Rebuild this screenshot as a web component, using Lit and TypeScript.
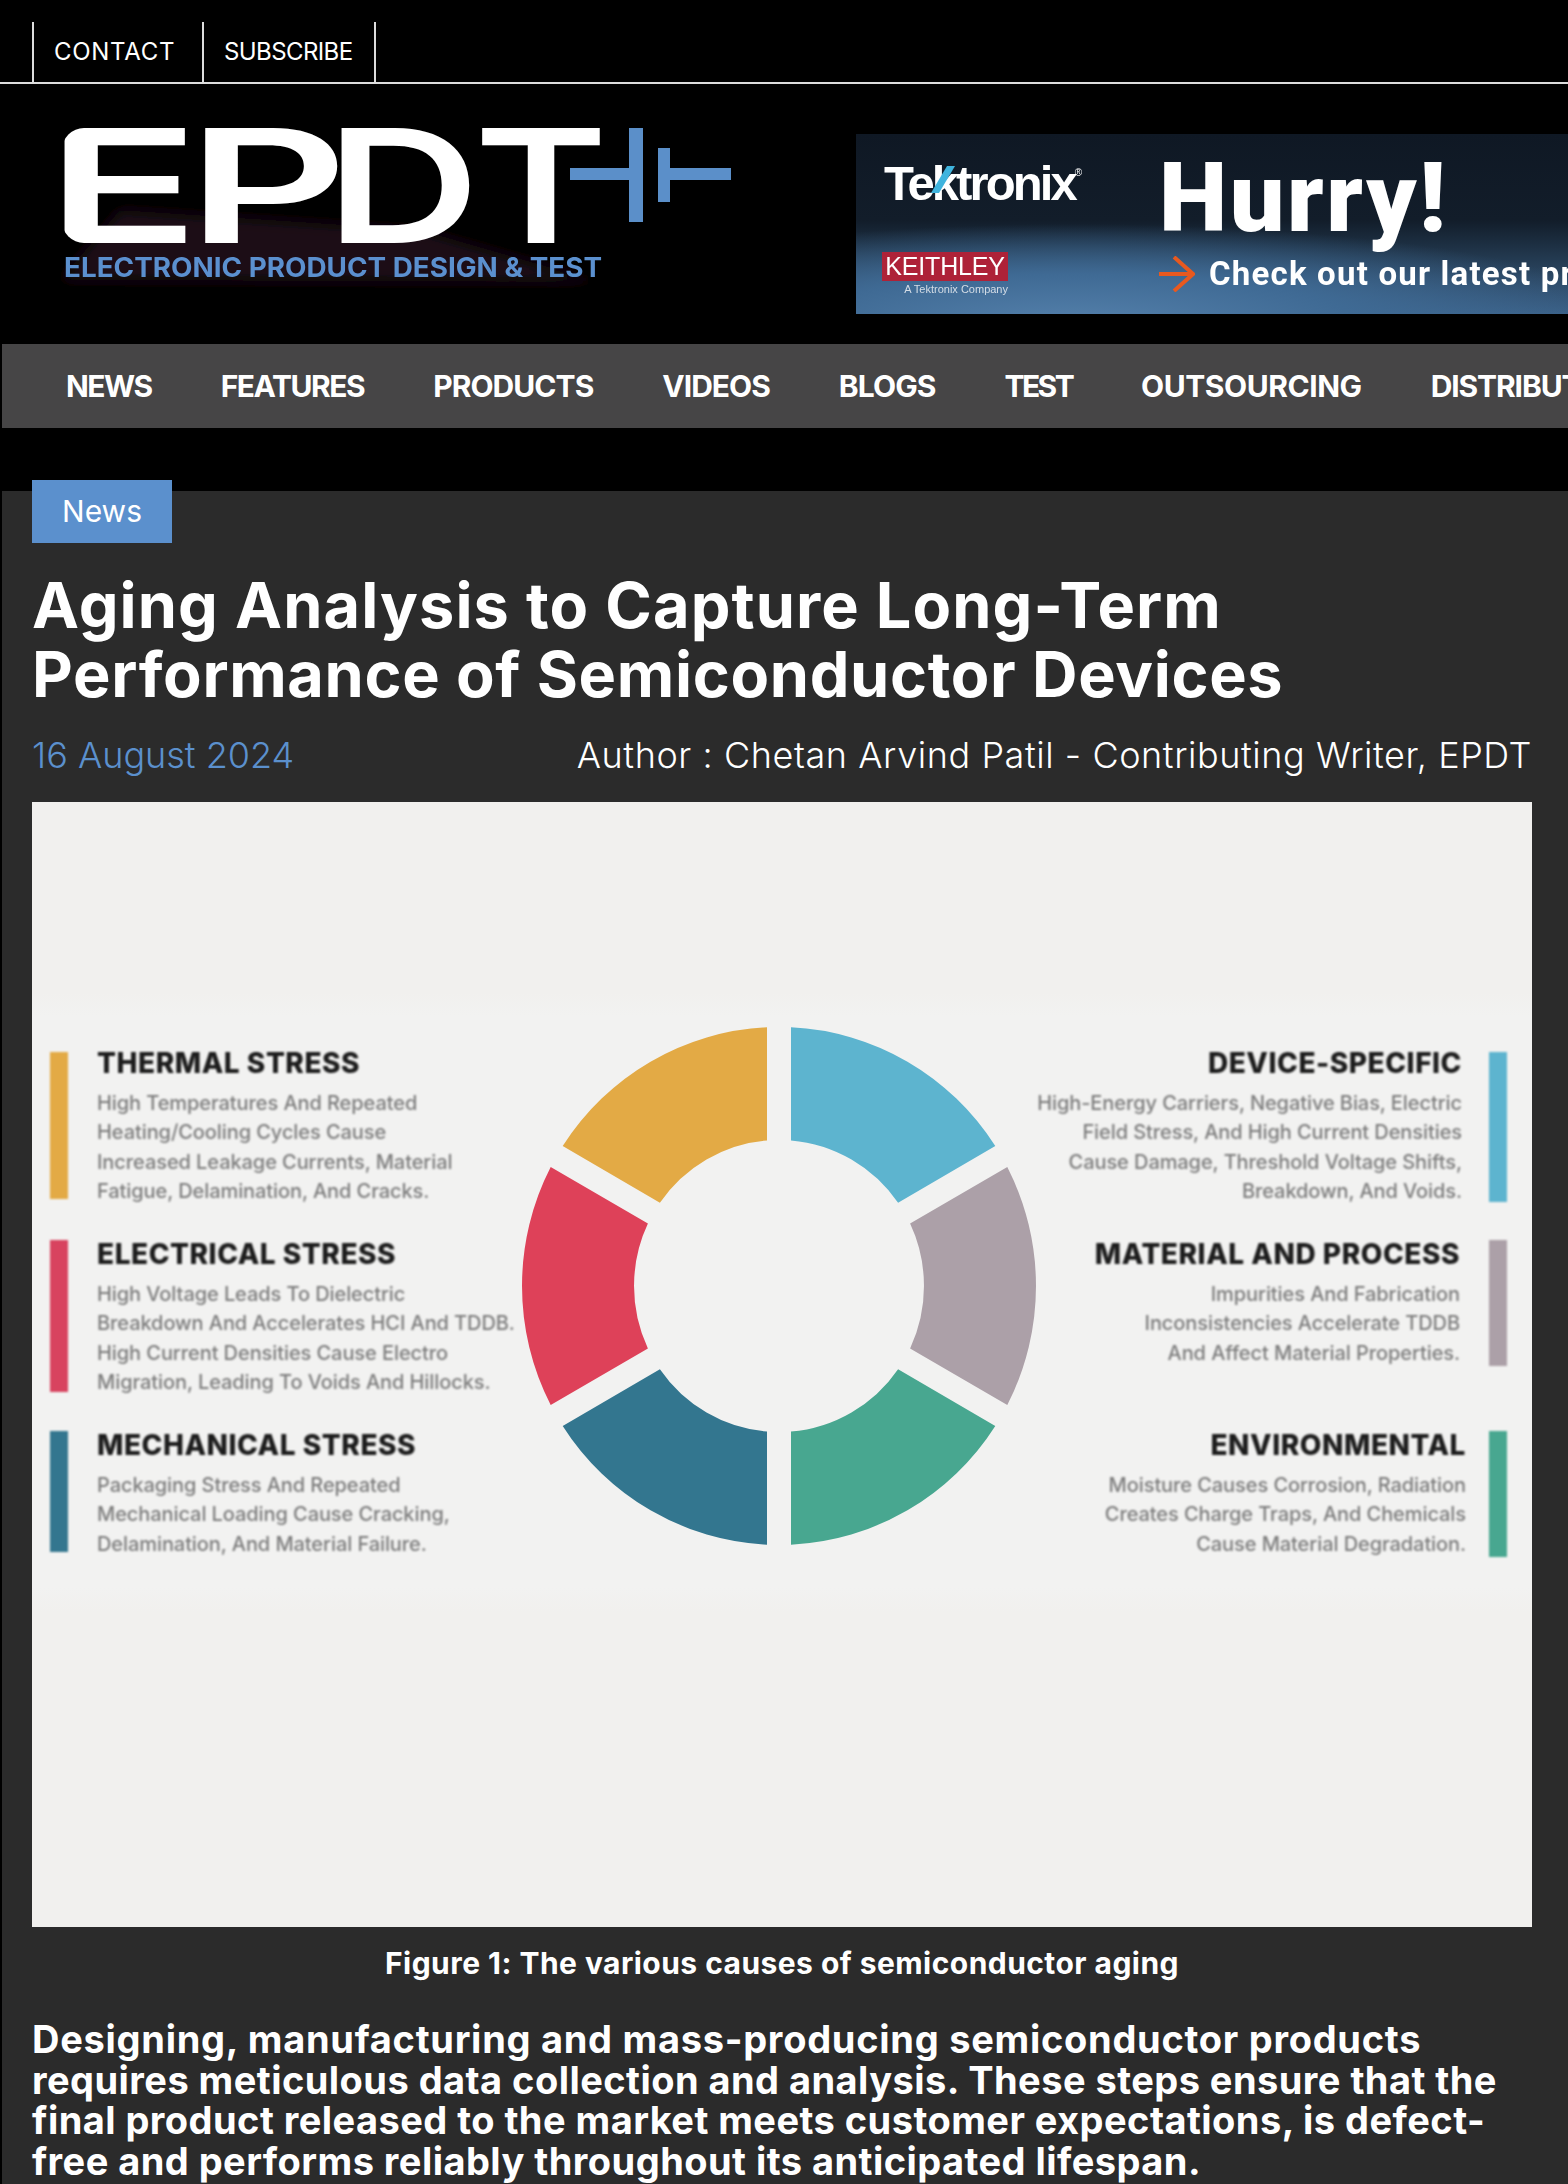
import { LitElement, html, svg, css } from "lit";
import { customElement } from "lit/decorators.js";

// letter spacing per item, the site's font has other proportions
const navItems = [
  { label: "NEWS", spacing: -1.5 },
  { label: "FEATURES", spacing: -1.45 },
  { label: "PRODUCTS", spacing: -0.95 },
  { label: "VIDEOS", spacing: -1 },
  { label: "BLOGS", spacing: -0.9 },
  { label: "TEST", spacing: -2.6 },
  { label: "OUTSOURCING", spacing: -0.45 },
  { label: "DISTRIBUTION", spacing: -1.1 },
];

interface Cause {
  title: string;
  lines: string[];
  color: string;
  barHeight: number;
  gap: number;
}

const leftCauses: Cause[] = [
  {
    title: "THERMAL STRESS",
    lines: ["High Temperatures And Repeated", "Heating/Cooling Cycles Cause", "Increased Leakage Currents, Material", "Fatigue, Delamination, And Cracks."],
    color: "#e3aa45",
    barHeight: 147,
    gap: 29,
  },
  {
    title: "ELECTRICAL STRESS",
    lines: ["High Voltage Leads To Dielectric", "Breakdown And Accelerates HCI And TDDB.", "High Current Densities Cause Electro", "Migration, Leading To Voids And Hillocks."],
    color: "#d8435f",
    barHeight: 152,
    gap: 29,
  },
  {
    title: "MECHANICAL STRESS",
    lines: ["Packaging Stress And Repeated", "Mechanical Loading Cause Cracking,", "Delamination, And Material Failure."],
    color: "#33768f",
    barHeight: 121,
    gap: 29,
  },
];

const rightCauses: Cause[] = [
  {
    title: "DEVICE-SPECIFIC",
    lines: ["High-Energy Carriers, Negative Bias, Electric", "Field Stress, And High Current Densities", "Cause Damage, Threshold Voltage Shifts,", "Breakdown, And Voids."],
    color: "#5db4cf",
    barHeight: 150,
    gap: 27,
  },
  {
    title: "MATERIAL AND PROCESS",
    lines: ["Impurities And Fabrication", "Inconsistencies Accelerate TDDB", "And Affect Material Properties."],
    color: "#aca0a8",
    barHeight: 126,
    gap: 29,
  },
  {
    title: "ENVIRONMENTAL",
    lines: ["Moisture Causes Corrosion, Radiation", "Creates Charge Traps, And Chemicals", "Cause Material Degradation."],
    color: "#48a790",
    barHeight: 126,
    gap: 23,
  },
];

// six ring segments, clockwise from the top right
const segments = ["#5db4cf", "#aca0a8", "#48a790", "#33768f", "#de4159", "#e3aa45"];

function segmentPath(index: number) {
  const R = 257;
  const r = 145;
  const half = 12;
  const start = -90 + index * 60;
  const pt = (radius: number, deg: number, sign: number) => {
    const a = (deg * Math.PI) / 180 + sign * Math.asin(half / radius);
    return `${(radius * Math.cos(a)).toFixed(1)} ${(radius * Math.sin(a)).toFixed(1)}`;
  };
  return `M${pt(R, start, 1)} A${R} ${R} 0 0 1 ${pt(R, start + 60, -1)} L${pt(r, start + 60, -1)} A${r} ${r} 0 0 0 ${pt(r, start, 1)} Z`;
}

@customElement("app-root")
export class AppRoot extends LitElement {
  static styles = css`
    :host {
      display: block;
      width: 1568px;
      height: 2184px;
      overflow: hidden;
      background: #000;
      color: #fff;
      font-family: Inter, "Noto Sans", sans-serif;
    }

    /* top links */
    .top {
      display: flex;
      height: 60px;
      padding: 22px 0 0 32px;
      border-bottom: 2px solid #ddd;
    }
    .top a {
      display: flex;
      align-items: center;
      padding: 0 0 2px 20px;
      border-left: 2px solid #ddd;
      font-size: 24px;
      box-sizing: border-box;
    }
    .top a.contact {
      width: 170px;
      letter-spacing: 0.7px;
    }
    .top a.subscribe {
      width: 174px;
      letter-spacing: -0.6px;
      border-right: 2px solid #ddd;
    }

    /* logo + banner */
    .masthead {
      display: flex;
      height: 260px;
    }
    .logo {
      flex: none;
      display: block;
      font-family: Inter, sans-serif;
    }
    .logo-mark {
      filter: blur(0.5px);
    }
    .banner {
      flex: none;
      width: 900px;
      height: 180px;
      margin-top: 50px;
      display: flex;
      background:
        radial-gradient(ellipse 560px 100px at 220px 190px, #5480ab 0, #3f6a94 50%, rgba(44, 76, 108, 0) 100%),
        linear-gradient(#0f1824 0, #121d2a 48%, #22384e 68%, #3a5f85 100%);
    }
    .brands {
      flex: none;
      width: 275px;
      padding-left: 28px;
    }
    .tek {
      position: relative;
      width: 200px;
      margin-top: 21px;
      font-family: "Liberation Sans", sans-serif;
      font-weight: 700;
      font-size: 49px;
      line-height: 56px;
      letter-spacing: -2.9px;
      filter: blur(0.5px);
    }
    .tek sup {
      font-size: 10px;
      font-weight: 400;
      letter-spacing: 0;
      vertical-align: 24px;
      line-height: 0;
    }
    .tek svg {
      position: absolute;
      left: 47px;
      top: 8px;
    }
    .keithley {
      width: 126px;
      height: 29px;
      margin: 41px 0 0 -2px;
      background: #ae2238;
      font-family: "Liberation Sans", sans-serif;
      font-size: 25px;
      line-height: 29px;
      text-align: center;
      letter-spacing: -0.2px;
      filter: blur(0.4px);
    }
    .company {
      width: 126px;
      margin: 2px 0 0 -2px;
      text-align: right;
      font-family: "Liberation Sans", sans-serif;
      font-size: 11px;
      line-height: 13px;
      color: #d4dde6;
      filter: blur(0.3px);
    }
    .pitch {
      flex: none;
      width: 640px;
      font-family: Roboto, sans-serif;
      font-weight: 700;
      filter: blur(0.4px);
    }
    .hurry {
      font-size: 97px;
      line-height: 104px;
      margin-top: 12px;
      letter-spacing: 2.5px;
      font-weight: 900;
    }
    .check {
      display: flex;
      align-items: center;
      gap: 14px;
      margin-top: 4px;
      font-size: 33px;
      line-height: 40px;
      letter-spacing: 1.2px;
      white-space: nowrap;
    }

    /* main nav */
    .nav {
      display: flex;
      gap: 69px;
      height: 84px;
      align-items: center;
      margin-left: 2px;
      padding-left: 64px;
      background: #464546;
      font-size: 30px;
      font-weight: 700;
      white-space: nowrap;
    }

    /* article */
    .article {
      margin: 63px 0 0 2px;
      padding: 0 36px 0 30px;
      height: 1693px;
      background: #2b2b2b;
    }
    .badge {
      position: relative;
      top: -11px;
      width: 140px;
      height: 63px;
      box-sizing: border-box;
      padding-bottom: 2px;
      display: flex;
      align-items: center;
      justify-content: center;
      background: #5b90cd;
      font-size: 30px;
    }
    h1 {
      margin: 17px 0 0;
      font-size: 63px;
      line-height: 69px;
      font-weight: 700;
      white-space: nowrap;
    }
    h1 .first {
      letter-spacing: 1.1px;
    }
    h1 .second {
      letter-spacing: 0.67px;
    }
    .meta {
      display: flex;
      justify-content: space-between;
      margin-top: 24px;
      font-size: 36px;
      line-height: 44px;
      font-weight: 300;
    }
    .date {
      color: #5b90cd;
    }
    .author {
      letter-spacing: 0.57px;
    }

    /* figure, drawn as the picture it is in the original */
    .figure {
      height: 1125px;
      margin-top: 25px;
      box-sizing: border-box;
      padding: 225px 25px 0 18px;
      background: linear-gradient(#f1f0ee 190px, #f2f2f1 215px, #f2f2f1 785px, #f1f0ee 810px);
      display: flex;
      color: #1c1c1c;
    }
    .col {
      flex: none;
      width: 472px;
      padding-top: 25px;
      display: grid;
      grid-template-rows: 188px 191px auto;
      filter: blur(0.85px);
    }
    .col.right {
      width: 471px;
    }
    .cause {
      display: flex;
      align-items: flex-start;
    }
    .right .cause {
      justify-content: flex-end;
      text-align: right;
    }
    .bar {
      flex: none;
      width: 18px;
    }
    .cause-title {
      margin-top: -1px;
      font-size: 28px;
      line-height: 30px;
      font-weight: 800;
      letter-spacing: 0.55px;
      white-space: nowrap;
    }
    .cause:first-child .cause-title {
      margin-top: -4px;
    }
    .cause-text {
      margin-top: 11px;
      font-size: 20px;
      line-height: 29.3px;
      font-weight: 500;
      letter-spacing: -0.08px;
      color: #7c7c7c;
      white-space: nowrap;
    }
    .ring {
      flex: none;
      display: block;
      width: 514px;
      height: 518px;
      overflow: visible;
      filter: blur(0.5px);
    }

    .caption {
      margin-top: 16px;
      text-align: center;
      font-size: 30px;
      line-height: 40px;
      font-weight: 700;
      letter-spacing: 0.45px;
    }
    .lead {
      margin-top: 36px;
      font-size: 38px;
      line-height: 40.7px;
      font-weight: 700;
      letter-spacing: 0.45px;
      white-space: nowrap;
    }
    .lead .first {
      letter-spacing: 0.72px;
    }
  `;

  renderLogo() {
    return html`<svg class="logo" width="856" height="260" viewBox="0 84 856 260">
      <defs>
        <filter id="soft"><feGaussianBlur stdDeviation="7"></feGaussianBlur></filter>
        <clipPath id="e-round"><rect x="62" y="128" width="220" height="115" rx="22"></rect></clipPath>
      </defs>
      <path d="M60 280 L120 210 L420 230 L600 282 Z" fill="#1a0b16" filter="url(#soft)"></path>
      <g class="logo-mark">
        <g fill="#fff" font-size="158" font-weight="600">
          <text x="46" y="243" textLength="154" lengthAdjust="spacingAndGlyphs" clip-path="url(#e-round)">E</text>
          <text x="187" y="243" textLength="161" lengthAdjust="spacingAndGlyphs">P</text>
          <text x="326" y="243" textLength="154" lengthAdjust="spacingAndGlyphs">D</text>
          <text x="474" y="243" textLength="134" lengthAdjust="spacingAndGlyphs">T</text>
        </g>
        <g fill="#5b8fc9">
          <rect x="570" y="168" width="60" height="12"></rect>
          <rect x="629" y="128" width="14" height="94"></rect>
          <rect x="658" y="148" width="12" height="54"></rect>
          <rect x="670" y="168" width="61" height="12"></rect>
        </g>
        <text x="64" y="277" fill="#5b90cf" font-size="27" font-weight="700" textLength="538" lengthAdjust="spacingAndGlyphs">ELECTRONIC PRODUCT DESIGN &amp; TEST</text>
      </g>
    </svg>`;
  }

  renderBanner() {
    return html`<div class="banner">
      <div class="brands">
        <div class="tek">
          Tektronix<sup>®</sup>
          <svg width="26" height="32" viewBox="0 0 26 32"><polygon points="0,30 8,30 24,3 16,3" fill="#3fb4de"></polygon></svg>
        </div>
        <div class="keithley">KEITHLEY</div>
        <div class="company">A Tektronix Company</div>
      </div>
      <div class="pitch">
        <div class="hurry">Hurry!</div>
        <div class="check">
          <svg width="36" height="36" viewBox="0 0 36 36" fill="none" stroke="#e8591f" stroke-width="4">
            <path d="M0 18 H33 M15 1 L34 18 L15 35"></path>
          </svg>
          Check out our latest products
        </div>
      </div>
    </div>`;
  }

  renderCause(c: Cause, right: boolean) {
    const bar = html`<div class="bar" style="height:${c.barHeight}px;background:${c.color}"></div>`;
    const text = html`<div style="${right ? `margin-right:${c.gap}px` : `margin-left:${c.gap}px`}">
      <div class="cause-title">${c.title}</div>
      <div class="cause-text">${c.lines.map((l) => html`${l}<br />`)}</div>
    </div>`;
    return html`<div class="cause">${right ? html`${text}${bar}` : html`${bar}${text}`}</div>`;
  }

  render() {
    return html`
      <div class="top">
        <a class="contact">CONTACT</a>
        <a class="subscribe">SUBSCRIBE</a>
      </div>
      <div class="masthead">${this.renderLogo()} ${this.renderBanner()}</div>
      <div class="nav">${navItems.map((n) => html`<span style="letter-spacing:${n.spacing}px">${n.label}</span>`)}</div>
      <div class="article">
        <div class="badge">News</div>
        <h1><span class="first">Aging Analysis to Capture Long-Term</span><br /><span class="second">Performance of Semiconductor Devices</span></h1>
        <div class="meta">
          <span class="date">16 August 2024</span>
          <span class="author">Author : Chetan Arvind Patil - Contributing Writer, EPDT</span>
        </div>
        <div class="figure">
          <div class="col">${leftCauses.map((c) => this.renderCause(c, false))}</div>
          <svg class="ring" viewBox="-257 -257 514 514" preserveAspectRatio="none">
            ${segments.map((color, i) => svg`<path d=${segmentPath(i)} fill=${color}></path>`)}
          </svg>
          <div class="col right">${rightCauses.map((c) => this.renderCause(c, true))}</div>
        </div>
        <div class="caption">Figure 1: The various causes of semiconductor aging</div>
        <div class="lead">
          <span class="first">Designing, manufacturing and mass-producing semiconductor products</span><br />
          requires meticulous data collection and analysis. These steps ensure that the<br />
          final product released to the market meets customer expectations, is defect-<br />
          free and performs reliably throughout its anticipated lifespan.
        </div>
      </div>
    `;
  }
}
